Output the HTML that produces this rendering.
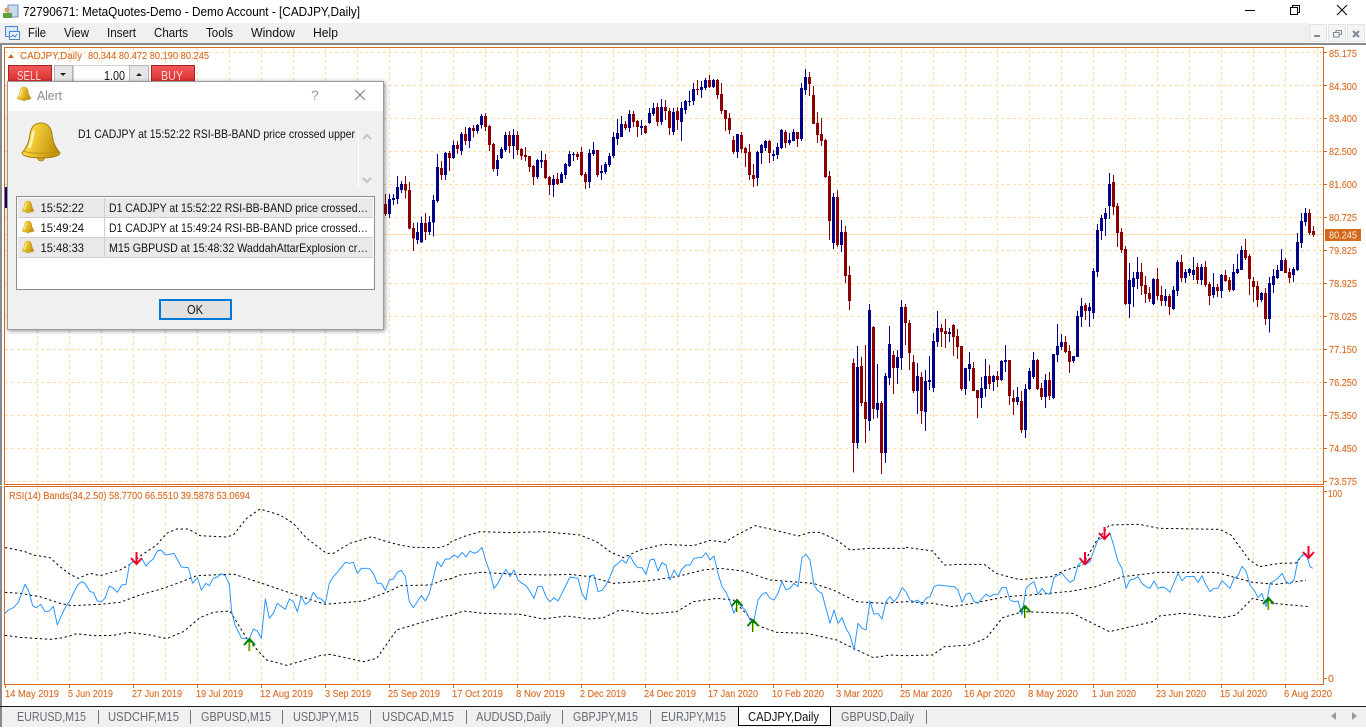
<!DOCTYPE html>
<html><head><meta charset="utf-8"><title>MetaQuotes</title>
<style>html,body{margin:0;padding:0;background:#fff;overflow:hidden}svg{display:block}text{font-family:"Liberation Sans",sans-serif}</style></head>
<body>
<svg id="s" width="1366" height="728" viewBox="0 0 1366 728" xmlns="http://www.w3.org/2000/svg">
<defs>
<linearGradient id="g1" x1="0" x2="1" y1="0" y2="0.3"><stop offset="0" stop-color="#fff3a0"/><stop offset=".35" stop-color="#f6d23c"/><stop offset="1" stop-color="#c2930c"/></linearGradient>
<linearGradient id="rb" x1="0" x2="0" y1="0" y2="1"><stop offset="0" stop-color="#f25a5a"/><stop offset="1" stop-color="#d92b2b"/></linearGradient>
<filter id="sh" x="-5%" y="-5%" width="110%" height="110%"><feDropShadow dx="1" dy="1" stdDeviation="2.5" flood-color="#000" flood-opacity=".45"/></filter>
<g id="bell"><circle cx="41" cy="157.5" r="3.5" fill="#d9ab1c" stroke="#a5800f" stroke-width=".8"/><path d="M41 123c-6 0-10 4-11 11-1 8-3 13-8 19 0 3 8 5 19 5s19-2 19-5c-5-6-7-11-8-19-1-7-5-11-11-11z" fill="url(#g1)" stroke="#a5800f" stroke-width="1"/><path d="M24 151c5 3 29 3 34 0" fill="none" stroke="#b98d10" stroke-width="1"/><path d="M34 131c-2 5-2 12-5 17" fill="none" stroke="#fffbe0" stroke-width="2.5" opacity=".8"/></g>
</defs>
<rect width="1366" height="728" fill="#fff"/>
<!-- title bar -->
<rect x="8" y="5" width="10" height="12" fill="#c6daf0" stroke="#6a94c4"/><circle cx="7" cy="10" r="2.6" fill="#d7a46e"/><rect x="3" y="13" width="9" height="5" fill="#5f9e3e"/>
<text x="23" y="16" font-size="12.5" fill="#000" textLength="337">72790671: MetaQuotes-Demo - Demo Account - [CADJPY,Daily]</text>
<path d="M1245 10.5h10" stroke="#000"/><rect x="1290.5" y="7.5" width="7" height="7" fill="#fff" stroke="#000" transform="translate(2 -2)"/><rect x="1290.5" y="7.5" width="7" height="7" fill="#fff" stroke="#000"/><path d="M1337 5l10 10M1347 5l-10 10" stroke="#000" fill="none"/>
<!-- menu -->
<rect x="0" y="23" width="1366" height="20" fill="#f0f0f0"/>
<rect x="1309" y="23" width="57" height="20" fill="#fff"/>
<rect x="1309.5" y="24.5" width="17" height="17" fill="#f4f4f4" stroke="#e3e3e3"/><rect x="1328.5" y="24.5" width="17" height="17" fill="#f4f4f4" stroke="#e3e3e3"/><rect x="1347.5" y="24.5" width="17" height="17" fill="#f4f4f4" stroke="#e3e3e3"/>
<rect x="1314" y="35" width="6" height="2" fill="#7c8894"/><rect x="1336" y="30.5" width="5.5" height="4" fill="none" stroke="#7c8894"/><rect x="1333.5" y="32.5" width="5.5" height="4.5" fill="#f4f4f4" stroke="#7c8894"/><path d="M1353 31l6 6M1359 31l-6 6" stroke="#7c8894" stroke-width="2"/>
<rect x="5.5" y="26.5" width="12" height="10" fill="#d8e8f8" stroke="#4a86c6"/><rect x="9.5" y="31.5" width="10" height="8" fill="#eaf3fb" stroke="#4a86c6"/><path d="M11 37l2-2 2 2 2-3" stroke="#4a86c6" fill="none"/>
<g font-size="12.5" fill="#111">
<text x="28" y="37" textLength="18">File</text><text x="64" y="37" textLength="25">View</text><text x="107" y="37" textLength="29">Insert</text><text x="154" y="37" textLength="34">Charts</text><text x="206" y="37" textLength="27">Tools</text><text x="251" y="37" textLength="44">Window</text><text x="313" y="37" textLength="25">Help</text></g>
<rect x="0" y="43" width="1366" height="2" fill="#8a8a8a"/>
<rect x="0" y="43" width="2" height="684" fill="#8a8a8a"/>
<!-- grid -->
<path fill="none" stroke="#FFDCA8" stroke-dasharray="3 3" shape-rendering="crispEdges" d="M5 52.5H1323M5 85.5H1323M5 118.5H1323M5 151.5H1323M5 184.5H1323M5 217.5H1323M5 250.5H1323M5 283.5H1323M5 316.5H1323M5 349.5H1323M5 382.5H1323M5 415.5H1323M5 448.5H1323M5 481.5H1323M37.5 48V684M69.5 48V684M101.5 48V684M133.5 48V684M165.5 48V684M197.5 48V684M229.5 48V684M261.5 48V684M293.5 48V684M325.5 48V684M357.5 48V684M389.5 48V684M421.5 48V684M453.5 48V684M485.5 48V684M517.5 48V684M549.5 48V684M581.5 48V684M613.5 48V684M645.5 48V684M677.5 48V684M709.5 48V684M741.5 48V684M773.5 48V684M805.5 48V684M837.5 48V684M869.5 48V684M901.5 48V684M933.5 48V684M965.5 48V684M997.5 48V684M1029.5 48V684M1061.5 48V684M1093.5 48V684M1125.5 48V684M1157.5 48V684M1189.5 48V684M1221.5 48V684M1253.5 48V684M1285.5 48V684M1317.5 48V684"/>
<path d="M5 234.5H1323" stroke="#FFDEAD" shape-rendering="crispEdges"/>
<rect x="5" y="187" width="2" height="21" fill="#00008B"/>
<!-- candles -->
<g shape-rendering="crispEdges" fill="none">
<g transform="translate(376.17 160) scale(.33333)">
<path stroke="#00008B" stroke-width="3" d="M40 102V174M52 102V135M64 48V132M76 63V99"/>
<path stroke="#00008B" stroke-width="9" d="M40 117V162M52 114V120M64 81V117"/>
<path stroke="#8B0000" stroke-width="3" d="M28 102V168"/><path stroke="#8B0000" stroke-width="9" d="M28 132V162"/>
</g>
<g transform="translate(400.17 50) scale(.33333)">
<path stroke="#00008B" stroke-width="3" d="M4 393V428M52 518V582M64 500V578M88 498V555M100 435V560M112 312V458M136 306V390M160 272V327M184 246V315M208 231V294M232 222V251M244 192V236M292 315V378M304 291V327M316 246V306M340 237V327M412 327V387M424 303V354M460 375V441M484 366V399M496 339V387M508 303V351M520 306V333M568 297V414M580 276V318M604 345V390M616 336V372M628 309V351M640 246V324M652 207V285M664 198V261M688 180V246M724 210V255M748 174V222M760 159V198M784 147V225M820 174V255M844 156V273M856 150V192M868 123V168M880 99V165M904 93V144M916 84V120M940 87V114M1012 252V324M1072 303V408M1084 282V342M1096 270V303M1120 300V333M1132 279V327M1144 237V297M1168 249V285M1180 237V273M1204 99V273M1216 57V135M1300 429V597M1324 510V606"/>
<path stroke="#00008B" stroke-width="9" d="M4 402V420M52 546V570M64 519V578M88 516V546M100 450V518M112 351V453M136 309V375M160 285V324M184 252V303M208 234V273M232 225V243M244 198V225M292 330V357M304 297V324M316 255V300M340 255V288M412 330V381M424 330V336M460 387V405M484 372V399M496 342V375M508 312V348M520 312V315M568 309V396M580 300V312M604 363V369M616 342V366M628 318V345M640 261V318M652 249V267M664 222V261M688 192V234M724 228V234M748 189V219M760 174V192M784 171V216M820 186V246M844 174V216M856 153V180M868 153V156M880 117V153M904 111V120M916 90V114M940 90V111M1012 252V306M1072 306V384M1084 285V309M1096 273V294M1120 312V318M1132 291V315M1144 240V294M1168 270V279M1180 246V273M1204 114V267M1216 81V120M1300 441V579M1324 546V585"/>
<path stroke="#8B0000" stroke-width="3" d="M16 378V446M28 396V538M40 519V603M76 489V570M124 333V390M148 303V363M172 273V312M196 231V285M220 225V263M256 189V243M268 225V303M280 279V365M328 243V309M352 243V315M364 294V330M376 291V333M388 318V366M400 345V405M436 312V387M448 378V435M472 369V405M532 306V330M544 291V378M556 366V417M592 300V381M676 213V240M700 183V231M712 210V261M736 225V252M772 159V228M796 150V210M808 174V255M832 171V240M892 90V135M928 75V114M952 87V147M964 99V192M976 180V243M988 189V252M1000 258V312M1024 246V309M1036 291V351M1048 282V390M1060 342V411M1108 270V339M1156 240V294M1192 246V291M1228 66V138M1240 108V222M1252 186V279M1264 204V288M1276 267V384M1288 363V570M1312 420V591M1336 528V699M1348 648V780"/>
<path stroke="#8B0000" stroke-width="9" d="M16 402V422M28 420V536M40 534V566M76 519V546M124 354V375M148 309V324M172 285V297M196 252V273M220 234V243M256 198V231M268 228V285M280 282V357M328 255V288M352 255V300M364 297V318M376 315V321M388 318V351M400 348V381M436 330V384M448 381V405M472 387V402M532 312V321M544 306V375M556 372V396M592 300V375M676 222V234M700 192V216M712 213V231M736 228V249M772 171V216M796 171V183M808 183V234M832 183V210M892 117V120M928 90V111M952 90V135M964 132V183M976 180V207M988 204V240M1000 270V306M1024 255V297M1036 294V309M1048 306V375M1060 375V387M1108 273V309M1156 246V279M1192 246V267M1228 81V102M1240 135V222M1252 219V255M1264 252V273M1276 270V381M1288 378V513M1312 441V585M1336 546V678M1348 675V753"/>
</g>
<g transform="translate(780.17 290) scale(.33333)">
<path stroke="#00008B" stroke-width="3" d="M232 168V476M268 42V423M292 222V384M316 249V519M328 108V285M352 180V282M364 30V240M412 219V372M436 240V423M448 198V300M460 129V306M472 63V171M508 114V156M556 234V315M568 186V273M604 261V354M616 207V321M640 255V303M664 210V273M676 165V246M712 291V345M736 282V444M748 234V300M760 186V267M796 252V354M820 192V327M832 102V216M844 132V180M880 198V219M892 63V201M904 24V111M928 39V111"/>
<path stroke="#00008B" stroke-width="9" d="M232 231V459M268 60V393M292 339V360M316 258V489M328 162V264M352 201V234M364 51V204M412 258V303M436 273V366M448 270V276M460 153V294M472 114V156M508 126V132M556 234V297M568 222V237M604 294V324M616 258V297M640 258V276M664 213V270M676 210V216M712 321V336M736 297V420M748 243V297M760 210V261M796 270V321M820 192V324M832 168V195M844 156V171M880 198V213M892 78V201M904 48V81M928 51V63"/>
<path stroke="#8B0000" stroke-width="3" d="M220 205V548M244 201V348M256 165V459M280 108V387M304 333V552M340 183V312M376 42V165M388 90V240M400 195V309M424 246V402M484 102V171M496 87V174M520 102V198M532 117V207M544 168V303M580 216V303M592 300V384M628 225V297M652 243V291M688 210V345M700 300V375M724 303V429M772 207V300M784 279V330M808 246V330M856 138V189M868 165V249M916 39V90"/>
<path stroke="#8B0000" stroke-width="9" d="M220 219V459M244 228V339M256 336V387M280 111V357M304 339V489M340 195V234M376 51V99M388 99V189M400 216V303M424 261V363M484 114V126M496 123V132M520 105V141M532 138V171M544 168V297M580 234V303M592 300V324M628 258V282M652 258V270M688 210V318M700 324V336M724 333V420M772 210V297M784 294V321M808 270V318M856 156V186M868 183V216M916 45V63"/>
</g>
<g transform="translate(880.17 50) scale(.33333)">
<path stroke="#00008B" stroke-width="3" d="M640 654V807M652 522V681M664 495V570M676 474V558M688 369V507M748 639V804M760 666V771M772 621V717M820 684V765M856 717V768M880 708V780M892 630V738M916 657V699M928 654V678M940 621V690M964 642V705M1000 669V744M1024 672V744M1060 642V723M1072 612V672M1084 588V660M1144 726V756M1168 681V848M1180 657V729M1192 645V687M1204 597V660M1240 651V696M1252 549V663M1264 489V594M1276 474V528"/>
<path stroke="#00008B" stroke-width="9" d="M640 663V789M652 540V666M664 504V543M676 489V507M688 402V468M748 690V762M760 684V711M772 666V687M820 687V762M856 738V753M880 720V777M892 636V723M916 666V684M928 657V669M940 660V675M964 651V690M1000 711V735M1024 675V723M1060 666V720M1072 657V669M1084 600V660M1144 729V750M1168 699V807M1180 678V705M1192 660V684M1204 630V663M1240 657V675M1252 576V660M1264 513V579M1276 489V516"/>
<path stroke="#8B0000" stroke-width="3" d="M700 375V495M712 459V591M724 534V609M736 588V765M784 639V735M796 678V759M808 711V756M832 654V750M844 708V768M868 732V795M904 615V696M952 639V702M976 633V711M988 696V765M1012 702V741M1036 660V696M1048 681V726M1096 567V630M1108 612V735M1120 681V756M1132 693V771M1156 714V825M1216 624V669M1228 654V699M1288 477V555M1300 528V561"/>
<path stroke="#8B0000" stroke-width="9" d="M700 396V471M712 468V549M724 546V600M736 597V762M784 666V708M796 705V732M808 729V747M832 687V738M844 735V753M868 738V771M904 636V684M952 651V690M976 651V705M988 702V738M1012 711V723M1036 675V693M1048 690V720M1096 600V624M1108 618V687M1120 693V711M1132 708V750M1156 729V807M1216 630V669M1228 666V684M1288 489V549M1300 543V555"/>
</g>
</g>
<!-- bands & rsi -->
<g fill="none">
<g stroke="#000" stroke-width="3" stroke-dasharray="7 8">
<g transform="translate(0 485) scale(.33333)">
<polyline points="15,188 40,192 75,200 100,210 150,218 180,245 210,268 235,280 270,265 300,272 360,255 390,238 425,210 470,180 500,145 530,132 565,132 600,152 680,156 700,150 740,100 780,72 840,90 880,115 920,160 980,205 1000,205 1050,175 1115,155 1160,170 1200,180 1240,187 1320,188 1350,176"/>
<polyline points="15,322 60,325 120,335 180,355 215,362 300,358 360,352 420,330 490,310 540,292 590,272 700,267 780,293 880,327 975,358 1090,348 1170,318 1200,302 1290,300 1330,285 1350,282"/>
<polyline points="15,451 60,457 150,463 190,458 230,446 280,452 340,451 385,442 450,450 500,461 550,440 600,398 640,382 690,378 740,460 800,525 860,541 960,512 990,508 1090,530 1130,520 1190,435 1290,405 1350,390"/>
</g>
<g transform="translate(450 485) scale(.33333)">
<polyline points="0,172 40,155 90,140 180,143 280,140 390,150 440,170 480,200 520,218 570,195 640,178 730,182 780,166 825,172 860,150 915,122 960,132 1045,153 1080,142 1110,142 1160,165 1200,195 1260,190 1368,190"/>
<polyline points="0,282 30,270 90,262 200,268 290,270 360,268 420,275 490,295 590,288 680,275 760,255 810,250 880,258 960,285 1090,295 1150,315 1220,350 1300,355 1368,350"/>
<polyline points="0,392 40,378 100,385 210,388 280,402 350,393 420,402 460,398 510,375 600,387 680,380 730,350 800,340 850,345 920,420 980,442 1070,445 1160,465 1210,490 1270,518 1320,510 1368,512"/>
</g>
<g transform="translate(906 485) scale(.33333)">
<polyline points="0,187 80,198 115,240 170,238 235,238 270,265 340,284 435,275 480,255 530,240 570,170 610,120 700,118 760,130 940,133 975,150 1030,225 1060,245 1120,235 1170,234 1195,205"/>
<polyline points="0,350 80,355 140,365 200,355 300,335 400,328 500,318 570,305 650,275 760,262 930,262 1040,292 1110,298 1200,286"/>
<polyline points="0,512 80,510 115,485 190,480 240,460 290,398 350,380 500,385 610,440 740,410 760,393 830,385 950,398 990,390 1040,340 1100,355 1210,365"/>
</g>
</g>
<g stroke="#1E90FF" stroke-width="2.8" stroke-linejoin="round">
<polyline transform="translate(0 485) scale(.33333)" points="15,385 25,375 40,368 55,352 65,325 75,298 85,315 98,362 108,368 122,358 135,380 148,378 160,364 172,420 185,390 197,365 208,350 220,325 233,300 245,290 255,295 270,320 280,322 292,348 304,350 315,340 328,303 340,310 352,322 365,300 378,298 388,240 400,228 412,235 425,220 438,243 450,230 460,222 472,198 483,195 497,210 510,208 522,205 544,246 565,248 578,295 592,278 604,315 618,295 628,302 640,280 652,276 664,266 676,272 688,298 695,380 705,420 725,460 748,462 760,432 772,438 784,460 796,342 808,400 820,385 832,355 856,373 868,342 880,350 892,380 904,335 916,358 928,350 940,322 952,338 964,342 976,355 988,295 1000,275 1012,262 1036,232 1048,235 1060,232 1072,265 1084,250 1108,250 1120,265 1132,295 1144,295 1156,316 1168,285 1180,282 1192,262 1204,256 1216,275 1228,350 1240,368 1252,350 1264,332 1276,348 1288,325 1312,230 1324,245 1336,222 1350,222"/>
<polyline transform="translate(450 485) scale(.33333)" points="0,220 12,210 24,218 36,202 48,216 60,198 72,205 84,200 96,187 108,230 120,262 132,310 144,295 156,270 168,253 180,275 192,255 204,285 216,295 228,302 240,320 252,340 264,304 276,304 288,335 300,350 312,338 324,348 336,325 348,300 360,276 384,280 396,325 408,345 420,272 432,270 444,320 456,316 468,300 480,275 492,245 504,235 516,224 528,235 540,212 552,235 564,248 576,248 588,268 600,225 612,222 624,258 636,233 648,240 660,285 672,255 684,275 696,252 708,240 720,240 732,220 756,217 768,203 780,225 792,213 804,265 816,305 828,322 840,350 852,385 864,355 876,365 888,378 900,405 912,405 924,345 936,328 948,322 960,340 972,345 984,325 996,290 1008,315 1020,310 1032,295 1044,305 1056,218 1068,208 1080,225 1092,300 1104,318 1116,325 1128,370 1140,415 1152,375 1164,415 1176,398 1188,430 1200,450 1212,495 1224,415 1236,430 1248,435 1260,348 1272,388 1284,385 1296,402 1308,350 1320,335 1332,350 1344,335 1356,308 1368,320"/>
<polyline transform="translate(906 485) scale(.33333)" points="0,320 12,345 24,350 36,345 48,360 60,340 72,335 84,305 96,300 144,305 156,315 168,352 180,328 192,324 204,350 216,355 228,340 240,328 252,335 264,328 276,328 288,307 300,307 312,345 324,350 336,348 348,390 360,310 372,298 384,290 396,328 408,310 420,325 432,328 444,278 456,270 468,265 480,280 492,292 504,285 516,240 528,230 540,238 552,230 564,195 576,165 588,160 600,155 612,145 624,185 636,230 648,250 660,310 672,285 684,282 696,275 708,295 720,305 732,310 744,288 756,310 768,306 780,310 792,322 816,265 828,287 840,275 864,274 876,292 888,272 900,300 912,320 924,310 936,310 948,287 972,310 984,280 996,272 1008,244 1020,258 1032,300 1044,315 1056,338 1068,325 1080,365 1092,295 1104,288 1116,280 1128,265 1140,290 1152,297 1164,285 1176,225 1188,212 1200,205 1212,245 1220,250"/>
</g>
</g>
<!-- arrows -->
<g fill="none" stroke="#f0002a" stroke-width="2">
<path d="M136.5 552V564M131 558l5.5 6 5.5-6"/><path d="M1104.5 527V539M1099 533l5.5 6 5.5-6"/><path d="M1085 552V564M1079.5 558l5.5 6 5.5-6"/><path d="M1308.5 546V558M1303 552l5.5 6 5.5-6"/>
</g>
<g fill="none" stroke="#008000" stroke-width="2">
<path d="M249.5 651V639M244 645l5.5-6 5.5 6"/><path d="M737 612V600M731.5 606l5.5-6 5.5 6"/><path d="M753 632V620M747.5 626l5.5-6 5.5 6"/><path d="M1025 618V606.5M1019.5 612l5.5-6 5.5 6"/><path d="M1268.5 610V598M1263 604l5.5-6 5.5 6"/>
</g>
<path d="M250 651V642M737.5 612V603M753.5 632V623M1025.5 618V609M1269 610V601" stroke="#e8d800" stroke-width="1" fill="none"/>
<!-- frames -->
<rect x="0" y="485" width="4" height="1" fill="#fff"/><rect x="5" y="485" width="1318" height="1" fill="#fff"/>
<g fill="none" stroke="#D2691E" shape-rendering="crispEdges">
<rect x="4.5" y="47.5" width="1319" height="437"/>
<rect x="4.5" y="486.5" width="1319" height="198"/>
<path d="M1323 52.5h4M1323 85.5h4M1323 118.5h4M1323 151.5h4M1323 184.5h4M1323 217.5h4M1323 250.5h4M1323 283.5h4M1323 316.5h4M1323 349.5h4M1323 382.5h4M1323 415.5h4M1323 448.5h4M1323 481.5h4M1323 491.5h4M1323 678.5h4"/>
<path d="M5.5 684v4M69.5 684v4M133.5 684v4M197.5 684v4M261.5 684v4M325.5 684v4M389.5 684v4M453.5 684v4M517.5 684v4M581.5 684v4M645.5 684v4M709.5 684v4M773.5 684v4M837.5 684v4M901.5 684v4M965.5 684v4M1029.5 684v4M1093.5 684v4M1157.5 684v4M1221.5 684v4M1285.5 684v4"/>
</g>
<g font-size="10.5" fill="#D9702A" stroke="#D9702A" stroke-width=".15">
<text x="1329" y="57" textLength="28">85.175</text><text x="1329" y="90" textLength="28">84.300</text><text x="1329" y="122" textLength="28">83.400</text><text x="1329" y="155" textLength="28">82.500</text><text x="1329" y="188" textLength="28">81.600</text><text x="1329" y="221" textLength="28">80.725</text><text x="1329" y="254" textLength="28">79.825</text><text x="1329" y="287" textLength="28">78.925</text><text x="1329" y="320" textLength="28">78.025</text><text x="1329" y="353" textLength="28">77.150</text><text x="1329" y="386" textLength="28">76.250</text><text x="1329" y="419" textLength="28">75.350</text><text x="1329" y="452" textLength="28">74.450</text><text x="1329" y="485" textLength="28">73.575</text>
<text x="1328" y="497" textLength="14">100</text><text x="1328" y="682">0</text>
<text x="20" y="59" textLength="62">CADJPY,Daily</text><text x="88" y="59" textLength="121">80.344 80.472 80.190 80.245</text>
<text x="9" y="499" textLength="241">RSI(14) Bands(34,2.50) 58.7700 66.5510 39.5878 53.0694</text>
<text x="5" y="697" textLength="54">14 May 2019</text><text x="68" y="697" textLength="45">5 Jun 2019</text><text x="132" y="697" textLength="50">27 Jun 2019</text><text x="196" y="697" textLength="47">19 Jul 2019</text><text x="260" y="697" textLength="53">12 Aug 2019</text><text x="325" y="697" textLength="46">3 Sep 2019</text><text x="388" y="697" textLength="52">25 Sep 2019</text><text x="452" y="697" textLength="51">17 Oct 2019</text><text x="516" y="697" textLength="49">8 Nov 2019</text><text x="580" y="697" textLength="46">2 Dec 2019</text><text x="644" y="697" textLength="52">24 Dec 2019</text><text x="708" y="697" textLength="50">17 Jan 2020</text><text x="772" y="697" textLength="52">10 Feb 2020</text><text x="836" y="697" textLength="47">3 Mar 2020</text><text x="900" y="697" textLength="52">25 Mar 2020</text><text x="964" y="697" textLength="51">16 Apr 2020</text><text x="1028" y="697" textLength="50">8 May 2020</text><text x="1092" y="697" textLength="44">1 Jun 2020</text><text x="1156" y="697" textLength="50">23 Jun 2020</text><text x="1220" y="697" textLength="47">15 Jul 2020</text><text x="1284" y="697" textLength="48">6 Aug 2020</text>
</g>
<path d="M8 58l3-4 3 4z" fill="#D2691E"/>
<rect x="1325" y="229" width="36" height="12" fill="#D2691E"/><text x="1329" y="238.5" font-size="10.5" fill="#ffeedd" textLength="28">80.245</text>
<!-- trade panel -->
<rect x="8.5" y="65.5" width="43" height="17" fill="url(#rb)" stroke="#a82020"/><text x="17" y="80" font-size="13" fill="#ffd8d8" textLength="24">SELL</text>
<rect x="54.5" y="65.5" width="18" height="17" fill="#e6e6e6" stroke="#b5b5b5"/><path d="M60 73h6l-3 3z" fill="#222"/>
<rect x="73.5" y="65.5" width="56" height="17" fill="#fff" stroke="#d0d0d0"/><text x="104" y="80" font-size="13" fill="#111" textLength="21">1.00</text>
<rect x="129.5" y="65.5" width="19" height="17" fill="#e6e6e6" stroke="#b5b5b5"/><path d="M136 76h6l-3-3z" fill="#222"/>
<rect x="151.5" y="65.5" width="43" height="17" fill="url(#rb)" stroke="#a82020"/><text x="161" y="80" font-size="13" fill="#ffd8d8" textLength="22">BUY</text>
<!-- dialog -->
<rect x="7.5" y="81.5" width="376" height="248" fill="#f0f0f0" stroke="#9a9a9a" filter="url(#sh)"/>
<rect x="8" y="82" width="375" height="29" fill="#fff"/>
<use href="#bell" transform="translate(17 87) scale(.37) translate(-22 -123)"/>
<text x="37" y="100" font-size="12.5" fill="#8a8a8a" textLength="25">Alert</text>
<text x="311" y="100" font-size="14" fill="#999">?</text>
<path d="M355 90l10 10M365 90l-10 10" stroke="#777" fill="none"/>
<use href="#bell"/>
<text x="78" y="138" font-size="12" fill="#111" textLength="277">D1 CADJPY at 15:52:22 RSI-BB-BAND price crossed upper</text>
<path d="M358.5 127V188" stroke="#fff"/>
<path d="M363 139l4-4 4 4M363 178l4 4 4-4" fill="none" stroke="#c4c4c4" stroke-width="2"/>
<rect x="16.5" y="196.5" width="358" height="93" fill="#fff" stroke="#888e94"/>
<rect x="18" y="198" width="355" height="19" fill="#e9e9e9"/><rect x="18" y="238" width="355" height="19" fill="#e9e9e9"/>
<path d="M18 217.5H373M18 237.5H373M18 257.5H373M104.5 198V257" stroke="#cfcfcf" fill="none"/>
<use href="#bell" transform="translate(22 201) scale(.32) translate(-22 -123)"/>
<use href="#bell" transform="translate(22 221) scale(.32) translate(-22 -123)"/>
<use href="#bell" transform="translate(22 241) scale(.32) translate(-22 -123)"/>
<g font-size="12" fill="#111">
<text x="40.5" y="212" textLength="43.5">15:52:22</text><text x="40.5" y="232" textLength="43.5">15:49:24</text><text x="40.5" y="252" textLength="43.5">15:48:33</text>
<text x="109" y="212" textLength="259">D1 CADJPY at 15:52:22 RSI-BB-BAND price crossed…</text>
<text x="109" y="232" textLength="259">D1 CADJPY at 15:49:24 RSI-BB-BAND price crossed…</text>
<text x="109" y="252" textLength="259">M15 GBPUSD at 15:48:32 WaddahAttarExplosion cr…</text>
</g>
<rect x="160" y="300" width="71" height="19" fill="#e1e1e1" stroke="#0078d7" stroke-width="2"/>
<text x="187" y="314" font-size="12.5" fill="#111" textLength="16">OK</text>
<!-- tabs -->
<rect x="2" y="707" width="1364" height="20" fill="#f0f0f0"/>
<rect x="0" y="706" width="1366" height="1" fill="#1a1a1a"/>
<path d="M98.5 710V724M190.5 710V724M282.5 710V724M370.5 710V724M466.5 710V724M562.5 710V724M650.5 710V724M926.5 710V724" stroke="#777"/>
<rect x="738.5" y="706.5" width="92" height="19" fill="#fff" stroke="#000"/>
<g font-size="12.5" fill="#666c72">
<text x="17" y="721" textLength="69">EURUSD,M15</text><text x="108" y="721" textLength="71">USDCHF,M15</text><text x="201" y="721" textLength="70">GBPUSD,M15</text><text x="293" y="721" textLength="66">USDJPY,M15</text><text x="382" y="721" textLength="72">USDCAD,M15</text><text x="476" y="721" textLength="75">AUDUSD,Daily</text><text x="573" y="721" textLength="65">GBPJPY,M15</text><text x="661" y="721" textLength="65">EURJPY,M15</text><text x="841" y="721" textLength="73">GBPUSD,Daily</text>
</g>
<text x="748" y="721" font-size="12.5" fill="#111" textLength="71">CADJPY,Daily</text>
<path d="M1336 712v8l-5-4zM1352 712v8l5-4z" fill="#9a9a9a"/>
</svg>
<script>document.querySelectorAll('#s text[textLength]').forEach(function(t){t.setAttribute('lengthAdjust','spacingAndGlyphs')});</script>
</body></html>
